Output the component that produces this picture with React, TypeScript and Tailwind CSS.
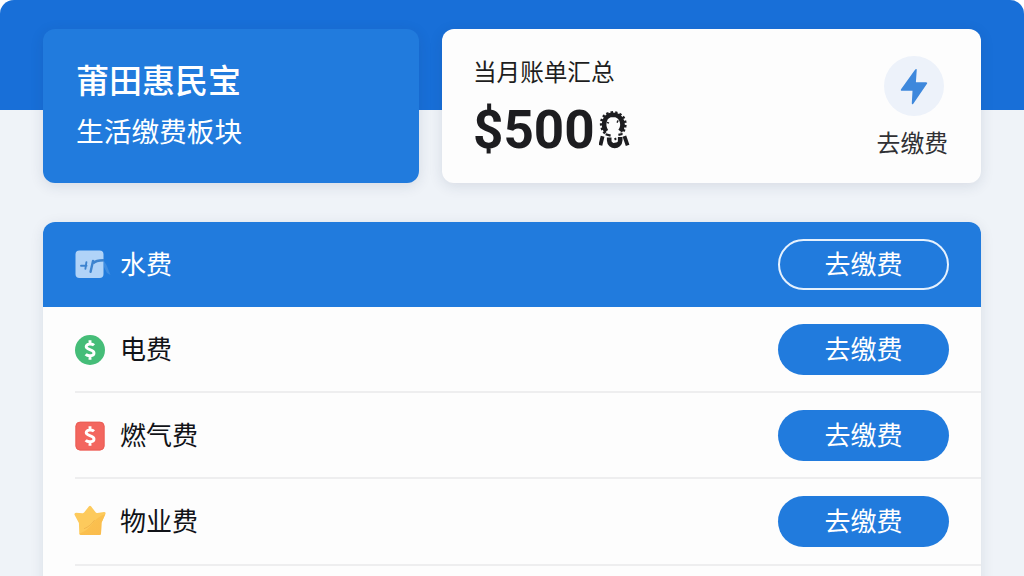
import type { ReactNode } from 'react';

function WaterIcon() {
  return (
    <svg width="36" height="30" viewBox="0 0 36 30" fill="none">
      <path d="M29 11 L31.5 15 L35.5 25 L32 23 L29 17 Z" fill="#4a94e3" opacity=".7" />
      <rect x="0.5" y="0.5" width="28" height="27.5" rx="4" fill="#b0d3f8" />
      <path d="M6 15.8H11.5M11.4 12.2L10.4 18.8" stroke="#3c83cf" strokeWidth="1.9" strokeLinecap="round" />
      <path d="M18 11L15.6 21.8" stroke="#3c83cf" strokeWidth="2.4" strokeLinecap="round" />
      <path d="M18 13.5C20 10.8 23 10.5 29 10.3" stroke="#3c83cf" strokeWidth="2.4" />
    </svg>
  );
}

function DollarSign() {
  return (
    <path
      d="M19 10.2C17.6 8.8 11.2 8.1 11.2 11.8C11.2 15 19 14.2 19 18C19 21.5 12.7 21.5 10.7 19.2M15 5.2V9M15 21V24.8"
      stroke="#fff"
      strokeWidth="2.9"
      fill="none"
    />
  );
}

function PowerIcon() {
  return (
    <svg width="30" height="30" viewBox="0 0 30 30" className="mt-px">
      <circle cx="15" cy="15" r="15" fill="#45bd78" />
      <DollarSign />
    </svg>
  );
}

function GasIcon() {
  return (
    <svg width="30" height="30" viewBox="0 0 30 30" className="mt-px">
      <rect x="0.5" y="0.8" width="29" height="28.6" rx="4.5" fill="#f3665f" />
      <rect x="1" y="1.3" width="28" height="27.6" rx="4" fill="none" stroke="#ea5f57" />
      <DollarSign />
    </svg>
  );
}

function PropertyIcon() {
  return (
    <svg width="32" height="31" viewBox="0 0 32 32" preserveAspectRatio="none" className="-ml-px mb-[3px]">
      <defs>
        <linearGradient id="starFold" x1="0" y1="0" x2="1" y2="1">
          <stop offset="0" stopColor="#fbc450" />
          <stop offset="1" stopColor="#fabb4d" />
        </linearGradient>
      </defs>
      <path
        d="M15 1.2Q16 .2 17 1.2L21.6 7.6Q22.3 8.5 23.4 8.2L30 7.2Q32 7.2 31.5 9L27.5 18.2L27 29.3Q26.9 31 25.2 31H7Q5.4 31 5.3 29.5L4.9 18.6L.5 10Q.1 8.3 2 8L8.6 8.4Q9.7 8.6 10.3 7.6Z"
        fill="#fdca5c"
      />
      <path d="M31.2 9.6L27.5 18.2L27 29.3Q26.9 31 25.2 31H7Q5.6 31 5.3 29.8C13 26.5 17 21.5 20.5 16.5Q24 12.2 31.2 9.6Z" fill="url(#starFold)" />
      <path d="M20.7 15.5C17.5 20 14.5 22.7 10 24.5" fill="none" stroke="#efb04a" strokeWidth=".8" />
    </svg>
  );
}

function AmountGlyph() {
  return (
    <svg width="32" height="40" viewBox="0 0 32 40" fill="none" className="ml-[4px]">
      <path d="M7.2 21.2C3.6 15.5 4.2 5.2 14 4.8C23.8 5.2 25.4 15.5 21.2 21.2" stroke="#1d1d20" strokeWidth="4.6" />
      <path
        d="M6.4 23.2C-.4 16 1.6 3.2 14 2.8C26.6 3.2 29 16 22.4 23.2"
        stroke="#1d1d20"
        strokeWidth="3.4"
        strokeDasharray="2.3 2"
      />
      <path d="M8 12.4L10 13.2M19.2 10.4L18 12.6" stroke="#1d1d20" strokeWidth="1.4" />
      <path d="M3.6 26.2L1.4 35.4M25.4 26.2L28.6 35.4" stroke="#1d1d20" strokeWidth="3.8" />
      <path d="M6.6 24.2L11.6 25.6M19.4 24.8L23.4 24" stroke="#1d1d20" strokeWidth="2.2" />
      <path d="M10.2 27.5V30.5C10.4 37.6 21 37.6 21.2 30.5V27" stroke="#1d1d20" strokeWidth="4.6" />
      <path d="M12 31.4L14.4 33L19.4 32V36H12Z" fill="#1d1d20" />
      <path d="M15 28.6L17 27.4L17.6 29.4L16 30.4Z" fill="#1d1d20" />
    </svg>
  );
}

function BillRow({ icon, label, active = false, className }: { icon: ReactNode; label: string; active?: boolean; className: string }) {
  return (
    <div className={active ? 'bg-[#217bdd] text-white' : 'text-[#111318]'}>
      <div className={`ml-8 flex items-center pr-8 ${className} ${active ? '' : 'border-b-2 border-[#eeeeef]'}`}>
        <span className="flex w-[45px] shrink-0 items-center">{icon}</span>
        <span className="flex-1 pb-[3px] text-[26px] leading-none">{label}</span>
        <button
          className={`flex h-[51px] w-[171px] items-center justify-center rounded-full bg-[#217bdd] pb-[3px] text-[26px] leading-none text-white ${
            active ? 'border-2 border-[#e5f1fe]' : ''
          }`}
        >
          去缴费
        </button>
      </div>
    </div>
  );
}

export default function App() {
  return (
    <div className="h-[576px] w-[1024px] overflow-hidden bg-white font-['Noto_Sans_CJK_SC',sans-serif]">
      <div className="h-full overflow-hidden rounded-t-[14px] bg-[#eff3f8]">
        <header className="h-[110px] bg-[#186fd8]" />
        <main className="relative -mt-[81px] px-[43px]">
          <div className="flex gap-[23px]">
            <section className="flex h-[154px] w-[376px] flex-col rounded-xl bg-[#217bdd] pl-[33px] pt-[32px] text-white shadow-[0_3px_14px_rgba(30,50,80,0.12)]">
              <h1 className="text-[33px] font-medium leading-[36px]">莆田惠民宝</h1>
              <p className="mt-[16px] text-[27.7px] leading-[34px]">生活缴费板块</p>
            </section>
            <section className="flex h-[154px] flex-1 justify-between rounded-xl bg-[#fdfdfd] pl-[31px] pr-[33px] shadow-[0_3px_14px_rgba(30,50,80,0.12)]">
              <div className="pt-[28px] text-[#1d1d20]">
                <h2 className="text-[23.6px] leading-[28px]">当月账单汇总</h2>
                <div className="mt-[23px] flex h-[44px] items-center">
                  <span className="font-[Roboto,sans-serif] text-[53px] font-bold leading-none">$500</span>
                  <AmountGlyph />
                </div>
              </div>
              <div className="flex flex-col items-center pt-[27px]">
                <div className="ml-[3px] flex size-[60px] items-center justify-center rounded-full bg-[#edf2fa]">
                  <svg width="28" height="38" viewBox="0 0 28 38" className="mt-[2px]">
                    <path d="M15.2 1.5Q17 .2 16.7 2.4L15.9 14.2H26Q28 14.2 26.8 16L13.3 35.7Q11.8 37.3 11.8 35L12.5 22.8H2Q.1 22.7 1.2 20.9Z" fill="#3e88dc" />
                  </svg>
                </div>
                <span className="mt-[12px] text-[23.8px] leading-[28px] text-[#303034]">去缴费</span>
              </div>
            </section>
          </div>
          <section className="mt-[39px] overflow-hidden rounded-t-xl bg-[#fdfdfd] shadow-[0_3px_14px_rgba(30,50,80,0.1)]">
            <BillRow active icon={<WaterIcon />} label="水费" className="h-[85px]" />
            <BillRow icon={<PowerIcon />} label="电费" className="h-[86px]" />
            <BillRow icon={<GasIcon />} label="燃气费" className="h-[86px]" />
            <BillRow icon={<PropertyIcon />} label="物业费" className="h-[87px]" />
            <div className="h-[40px]" />
          </section>
        </main>
      </div>
    </div>
  );
}
